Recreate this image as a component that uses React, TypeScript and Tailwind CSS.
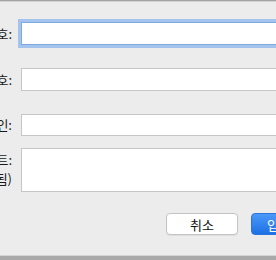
export default function App() {
  const font = { fontFamily: '"Noto Sans CJK KR", "Liberation Sans", sans-serif' };
  return (
    <div className="w-[276px] h-[260px] overflow-hidden bg-[#ececec] flex flex-col text-[13px] text-[#1a1a1a]" style={font}>
      <div className="h-px bg-[#a3a3a3]" />
      <div className="h-px bg-[#d2d2d2]" />

      <div className="flex flex-col ml-[-88px] w-[480px]">
        {/* row 1, focused */}
        <div className="flex items-center mt-[20px]">
          <label className="w-[100px] shrink-0 text-right whitespace-nowrap">계정 번호:</label>
          <div className="ml-[9px] h-[23px] flex-1 bg-white border border-[#7fa9df] shadow-[0_0_0_3px_#a3c4ec]" />
        </div>

        <div className="flex items-center mt-[23px]">
          <label className="w-[100px] shrink-0 text-right whitespace-nowrap">전화 번호:</label>
          <div className="ml-[9px] h-[23px] flex-1 bg-white border border-[#c6c6c6]" />
        </div>

        <div className="flex items-center mt-[23px]">
          <label className="w-[100px] shrink-0 text-right whitespace-nowrap">확인:</label>
          <div className="ml-[9px] h-[22px] flex-1 bg-white border border-[#c6c6c6]" />
        </div>

        <div className="flex items-start mt-[12px]">
          <label className="w-[100px] shrink-0 text-right whitespace-nowrap leading-[19px] pt-[2px]">
            <div>메모 노트:</div>
            <div>(선택 사항됨)</div>
          </label>
          <div className="ml-[9px] h-[44px] flex-1 bg-white border border-[#c6c6c6]" />
        </div>
      </div>

      <div className="flex mt-[21px] ml-[166px] gap-[13px] w-[300px]">
        <button className="w-[72px] h-[22px] shrink-0 rounded-[4px] bg-white border border-[#c4c4c4] shadow-[0_1px_0_rgba(0,0,0,0.06)] text-[13px] leading-none text-[#111]">
          취소
        </button>
        <button className="h-[22px] shrink-0 pl-[15px] pr-[15px] rounded-[4px] bg-gradient-to-b from-[#4a98f7] to-[#1d6fe6] border border-[#2a74de] text-[13px] leading-none text-white">
          입력
        </button>
      </div>

      <div className="flex-1" />
      <div className="h-px bg-[#d4d4d4]" />
      <div className="h-[4px] bg-[#a9a9a9]" />
    </div>
  );
}
